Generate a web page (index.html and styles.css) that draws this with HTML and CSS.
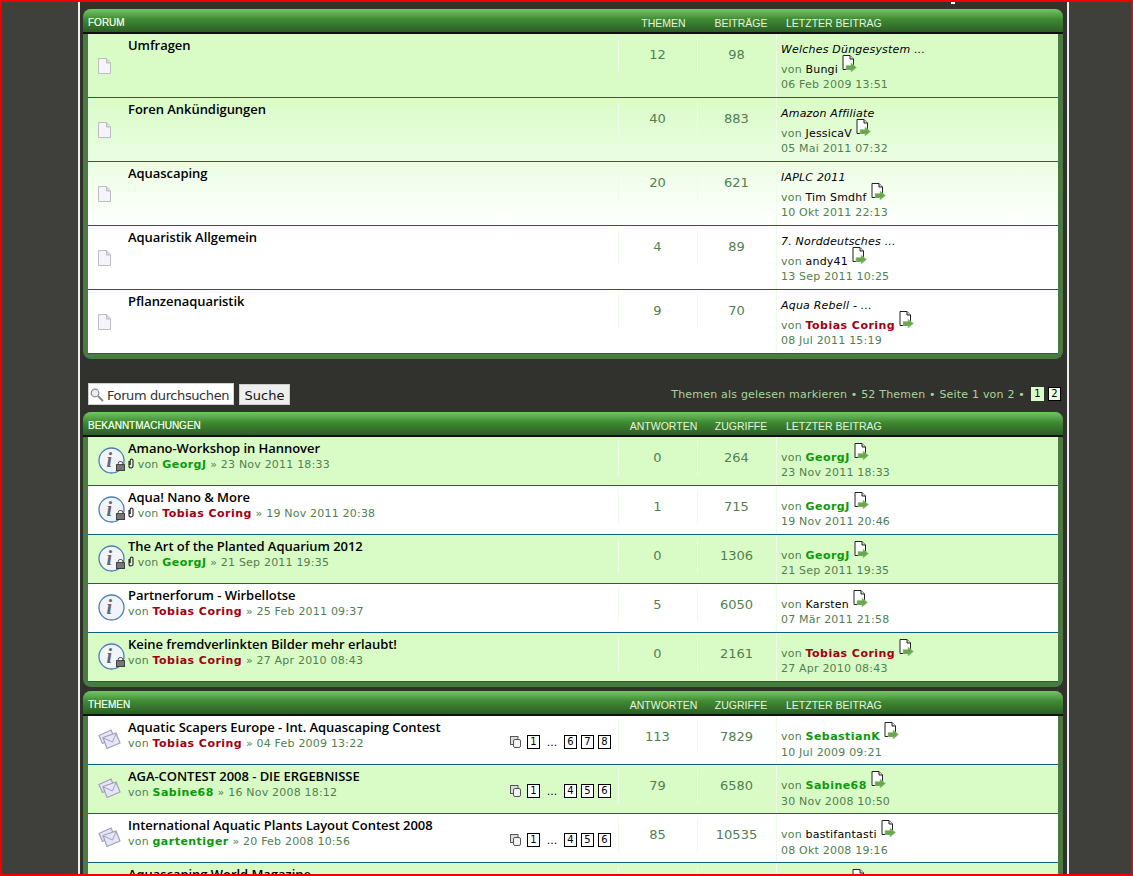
FILE: index.html
```html
<!DOCTYPE html>
<html lang="de">
<head>
<meta charset="utf-8">
<title>Forum</title>
<link rel="stylesheet" href="styles.css">
</head>
<body>
<svg class="defs" width="0" height="0">
  <defs>
    <symbol id="page" viewBox="0 0 13 16">
      <path d="M.5.5h8l4 4.500v10.500H.5z" fill="#f5f3fb" stroke="#bdbdbd"/>
      <path d="M8.500.5v4.500h4" fill="#d8d8d8" stroke="#bdbdbd"/>
    </symbol>
    <symbol id="post" viewBox="0 0 15 18">
      <path d="M1 .5h7l3.500 3.500v10.500H1z" fill="#fff" stroke="#222"/>
      <path d="M8 .5v3.500h3.500" fill="#ddd" stroke="#222"/>
      <path d="M4 10.500h5V8l5.500 4.500L9 17v-2.500H4z" fill="#6aa84f" stroke="#9ccb88" stroke-width=".6"/>
    </symbol>
    <symbol id="info" viewBox="0 0 27 27">
      <circle cx="13.500" cy="13.500" r="12.500" fill="#f2f4fb" stroke="#4a7fb5" stroke-width="1.300"/>
      <text class="info-i" x="8.500" y="20">i</text>
    </symbol>
    <symbol id="lock" viewBox="0 0 10 11">
      <rect x="2.500" y=".5" width="5" height="5" rx="2" fill="none" stroke="#444"/>
      <rect x=".5" y="4" width="9" height="6.500" fill="#777" stroke="#333"/>
    </symbol>
    <symbol id="clip" viewBox="0 0 6 11">
      <path d="M1 3v5a2 2 0 0 0 4 0V2.500a1.400 1.400 0 0 0-2.800 0V7" fill="none" stroke="#333" stroke-width="1.200"/>
    </symbol>
    <symbol id="topic" viewBox="0 0 23 21">
      <path d="M1 6.500 13 1l3.500 8-12 5.500z" fill="#e6e6f4" stroke="#a0a0b8" stroke-width="1.200"/>
      <path d="M5 8.500 18 4l4 10-13 5.500z" fill="#e6e6fa" stroke="#a0a0b8" stroke-width="1.200"/>
      <path d="M5.500 9 14.500 13 18 4.500" fill="none" stroke="#a0a0b8"/>
    </symbol>
    <symbol id="pages" viewBox="0 0 11 12">
      <rect x=".5" y=".5" width="7.500" height="8" fill="#ddd" stroke="#555"/>
      <rect x="3.500" y="3.500" width="7" height="8" rx="1.500" fill="#f4f4f4" stroke="#555"/>
    </symbol>
    <symbol id="lens" viewBox="0 0 14 14">
      <circle cx="5" cy="5" r="3.800" fill="#e8eef6" stroke="#8a8a8a" stroke-width="1.200"/>
      <path d="M8 8l5 5" stroke="#888" stroke-width="2"/>
    </symbol>
  </defs>
</svg>
<div class="frame"></div>
<div class="wrap">
  <span class="tick"></span>

  <section class="panel">
    <header class="head">
      <span class="head-title">FORUM</span>
      <span class="head-col">THEMEN</span>
      <span class="head-col">BEITRÄGE</span>
      <span class="head-last">LETZTER BEITRAG</span>
    </header>
    <ul class="rows rows-fade">
      <li class="row row-forum">
        <svg class="ico-page"><use href="#page"/></svg>
        <div class="main"><a class="title">Umfragen</a></div>
        <div class="num">12</div><div class="num">98</div>
        <div class="last"><em>Welches Düngesystem ...</em><span class="by">von <b class="plain">Bungi</b><svg class="ico-post"><use href="#post"/></svg></span><span>06 Feb 2009 13:51</span></div>
      </li>
      <li class="row row-forum">
        <svg class="ico-page"><use href="#page"/></svg>
        <div class="main"><a class="title">Foren Ankündigungen</a></div>
        <div class="num">40</div><div class="num">883</div>
        <div class="last"><em>Amazon Affiliate</em><span class="by">von <b class="plain">JessicaV</b><svg class="ico-post"><use href="#post"/></svg></span><span>05 Mai 2011 07:32</span></div>
      </li>
      <li class="row row-forum">
        <svg class="ico-page"><use href="#page"/></svg>
        <div class="main"><a class="title">Aquascaping</a></div>
        <div class="num">20</div><div class="num">621</div>
        <div class="last"><em>IAPLC 2011</em><span class="by">von <b class="plain">Tim Smdhf</b><svg class="ico-post"><use href="#post"/></svg></span><span>10 Okt 2011 22:13</span></div>
      </li>
      <li class="row row-forum">
        <svg class="ico-page"><use href="#page"/></svg>
        <div class="main"><a class="title">Aquaristik Allgemein</a></div>
        <div class="num">4</div><div class="num">89</div>
        <div class="last"><em>7. Norddeutsches ...</em><span class="by">von <b class="plain">andy41</b><svg class="ico-post"><use href="#post"/></svg></span><span>13 Sep 2011 10:25</span></div>
      </li>
      <li class="row row-forum">
        <svg class="ico-page"><use href="#page"/></svg>
        <div class="main"><a class="title">Pflanzenaquaristik</a></div>
        <div class="num">9</div><div class="num">70</div>
        <div class="last"><em>Aqua Rebell - ...</em><span class="by">von <b class="red">Tobias Coring</b><svg class="ico-post"><use href="#post"/></svg></span><span>08 Jul 2011 15:19</span></div>
      </li>
    </ul>
  </section>

  <div class="bar">
    <div class="search">
      <label class="search-box"><svg class="ico-lens"><use href="#lens"/></svg>Forum durchsuchen</label>
      <button class="search-btn">Suche</button>
    </div>
    <div class="pagination">
      <span>Themen als gelesen markieren • 52 Themen • Seite 1 von 2 •</span>
      <span class="pg pg-on">1</span><span class="pg pg-off">2</span>
    </div>
  </div>

  <section class="panel">
    <header class="head">
      <span class="head-title">BEKANNTMACHUNGEN</span>
      <span class="head-col">ANTWORTEN</span>
      <span class="head-col">ZUGRIFFE</span>
      <span class="head-last">LETZTER BEITRAG</span>
    </header>
    <ul class="rows">
      <li class="row green">
        <span class="ico-wrap"><svg class="ico-info"><use href="#info"/></svg><svg class="ico-lock"><use href="#lock"/></svg></span>
        <div class="main"><a class="title">Amano-Workshop in Hannover</a><span class="sub"><svg class="ico-clip"><use href="#clip"/></svg> von <b class="grn">GeorgJ</b> » 23 Nov 2011 18:33</span></div>
        <div class="num">0</div><div class="num">264</div>
        <div class="last two"><span class="by">von <b class="grn">GeorgJ</b><svg class="ico-post"><use href="#post"/></svg></span><span>23 Nov 2011 18:33</span></div>
      </li>
      <li class="row">
        <span class="ico-wrap"><svg class="ico-info"><use href="#info"/></svg><svg class="ico-lock"><use href="#lock"/></svg></span>
        <div class="main"><a class="title">Aqua! Nano &amp; More</a><span class="sub"><svg class="ico-clip"><use href="#clip"/></svg> von <b class="red">Tobias Coring</b> » 19 Nov 2011 20:38</span></div>
        <div class="num">1</div><div class="num">715</div>
        <div class="last two"><span class="by">von <b class="grn">GeorgJ</b><svg class="ico-post"><use href="#post"/></svg></span><span>19 Nov 2011 20:46</span></div>
      </li>
      <li class="row green">
        <span class="ico-wrap"><svg class="ico-info"><use href="#info"/></svg><svg class="ico-lock"><use href="#lock"/></svg></span>
        <div class="main"><a class="title">The Art of the Planted Aquarium 2012</a><span class="sub"><svg class="ico-clip"><use href="#clip"/></svg> von <b class="grn">GeorgJ</b> » 21 Sep 2011 19:35</span></div>
        <div class="num">0</div><div class="num">1306</div>
        <div class="last two"><span class="by">von <b class="grn">GeorgJ</b><svg class="ico-post"><use href="#post"/></svg></span><span>21 Sep 2011 19:35</span></div>
      </li>
      <li class="row">
        <span class="ico-wrap"><svg class="ico-info"><use href="#info"/></svg></span>
        <div class="main"><a class="title">Partnerforum - Wirbellotse</a><span class="sub">von <b class="red">Tobias Coring</b> » 25 Feb 2011 09:37</span></div>
        <div class="num">5</div><div class="num">6050</div>
        <div class="last two"><span class="by">von <b class="plain">Karsten</b><svg class="ico-post"><use href="#post"/></svg></span><span>07 Mär 2011 21:58</span></div>
      </li>
      <li class="row green">
        <span class="ico-wrap"><svg class="ico-info"><use href="#info"/></svg><svg class="ico-lock"><use href="#lock"/></svg></span>
        <div class="main"><a class="title">Keine fremdverlinkten Bilder mehr erlaubt!</a><span class="sub">von <b class="red">Tobias Coring</b> » 27 Apr 2010 08:43</span></div>
        <div class="num">0</div><div class="num">2161</div>
        <div class="last two"><span class="by">von <b class="red">Tobias Coring</b><svg class="ico-post"><use href="#post"/></svg></span><span>27 Apr 2010 08:43</span></div>
      </li>
    </ul>
  </section>

  <section class="panel panel-next">
    <header class="head">
      <span class="head-title">THEMEN</span>
      <span class="head-col">ANTWORTEN</span>
      <span class="head-col">ZUGRIFFE</span>
      <span class="head-last">LETZTER BEITRAG</span>
    </header>
    <ul class="rows">
      <li class="row">
        <svg class="ico-topic"><use href="#topic"/></svg>
        <div class="main"><a class="title">Aquatic Scapers Europe - Int. Aquascaping Contest</a><span class="sub">von <b class="red">Tobias Coring</b> » 04 Feb 2009 13:22</span>
          <span class="mini"><svg class="ico-pages"><use href="#pages"/></svg><i>1</i><u>...</u><i>6</i><i>7</i><i>8</i></span></div>
        <div class="num">113</div><div class="num">7829</div>
        <div class="last two"><span class="by">von <b class="grn">SebastianK</b><svg class="ico-post"><use href="#post"/></svg></span><span>10 Jul 2009 09:21</span></div>
      </li>
      <li class="row green">
        <svg class="ico-topic"><use href="#topic"/></svg>
        <div class="main"><a class="title">AGA-CONTEST 2008 - DIE ERGEBNISSE</a><span class="sub">von <b class="grn">Sabine68</b> » 16 Nov 2008 18:12</span>
          <span class="mini"><svg class="ico-pages"><use href="#pages"/></svg><i>1</i><u>...</u><i>4</i><i>5</i><i>6</i></span></div>
        <div class="num">79</div><div class="num">6580</div>
        <div class="last two"><span class="by">von <b class="grn">Sabine68</b><svg class="ico-post"><use href="#post"/></svg></span><span>30 Nov 2008 10:50</span></div>
      </li>
      <li class="row">
        <svg class="ico-topic"><use href="#topic"/></svg>
        <div class="main"><a class="title">International Aquatic Plants Layout Contest 2008</a><span class="sub">von <b class="grn">gartentiger</b> » 20 Feb 2008 10:56</span>
          <span class="mini"><svg class="ico-pages"><use href="#pages"/></svg><i>1</i><u>...</u><i>4</i><i>5</i><i>6</i></span></div>
        <div class="num">85</div><div class="num">10535</div>
        <div class="last two"><span class="by">von <b class="plain">bastifantasti</b><svg class="ico-post"><use href="#post"/></svg></span><span>08 Okt 2008 19:16</span></div>
      </li>
      <li class="row green">
        <svg class="ico-topic"><use href="#topic"/></svg>
        <div class="main"><a class="title">Aquascaping World Magazine</a></div>
        <div class="num"></div><div class="num"></div>
        <div class="last two"><span class="by"><svg class="ico-post ico-post-far"><use href="#post"/></svg></span></div>
      </li>
    </ul>
  </section>
</div>
</body>
</html>
```
FILE: styles.css
```css
* { box-sizing: border-box; }
html, body { margin: 0; height: 876px; overflow: hidden; }
body {
  background: #3f403c;
  font-family: "DejaVu Sans", sans-serif;
  font-size: 11px;
  letter-spacing: .2px;
  color: #527f50;
  padding: 0 64px 0 78px;
}
.defs { position: absolute; }
.frame {
  position: fixed;
  inset: 0;
  border: 2px solid #f00000;
  pointer-events: none;
  z-index: 5;
}
.wrap {
  position: relative;
  width: 991px;
  height: 876px;
  background: #31322e;
  border-left: 2px solid #eee;
  border-right: 2px solid #eee;
  padding: 9px 4px 0 3px;
  overflow: hidden;
}
.tick {
  position: absolute;
  left: 871px;
  top: 2px;
  width: 4px;
  height: 2px;
  background: #fff;
}
.panel {
  width: 980px;
  background: #4a7a40;
  border-radius: 8px;
  padding-bottom: 5px;
}
.panel-next { margin-top: 4px; }
.head {
  display: flex;
  align-items: center;
  height: 25px;
  padding: 3px 0 1px 5px;
  color: #e6f5df;
  font-family: "Liberation Sans", sans-serif;
  font-size: 10.5px;
  letter-spacing: 0;
  background:
    linear-gradient(#101010, #101010) 0 23px / 100% 2px no-repeat,
    linear-gradient(#73c663, #3f8a33 45%, #2c5e25 100%) 0 0 / 100% 23px no-repeat;
  border-radius: 8px 8px 0 0;
}
.head-title { flex: 1; font-size: 10px; text-shadow: 0 0 .6px #e6f5df; }
.head-col { width: 79px; text-align: center; padding-left: 2px; }
.head-col + .head-col { padding: 0 1px 0 0; }
.head-last { width: 282px; padding-left: 5px; }
.rows {
  list-style: none;
  margin: 0 5px;
  padding: 0;
  background: #fff;
}
.rows-fade {
  background: linear-gradient(#d9fcc7 0, #d9fcc7 64px, #fff 192px);
}
.row {
  position: relative;
  display: flex;
  align-items: flex-start;
  height: 49px;
  padding-left: 10px;
  border-bottom: 1px solid #0f5f7f;
  background: #fff;
}
.green { background: #d9fcc7; }
.row-forum { height: 64px; background: transparent; }
.ico-page { width: 13px; height: 16px; margin-top: 24px; flex: none; }
.ico-wrap { position: relative; width: 27px; height: 27px; margin-top: 10px; flex: none; }
.ico-info { width: 27px; height: 27px; display: block; }
.info-i { font: italic 700 20px "Liberation Serif", serif; fill: #666; }
.ico-lock { position: absolute; left: 18px; top: 14px; width: 9px; height: 10px; }
.ico-topic { width: 23px; height: 21px; margin-top: 13px; flex: none; }
.ico-post { width: 15px; height: 18px; margin: -18px 0 0 4px; vertical-align: 0; }
.ico-post-far { margin-left: 71px; }
.ico-clip { width: 6px; height: 11px; vertical-align: -1px; }
.ico-lens { width: 14px; height: 14px; flex: none; }
.ico-pages { width: 11px; height: 12px; margin-right: 2px; }
.main { flex: 1; min-width: 0; position: relative; padding: 2px 0 0 3px; align-self: stretch; }
.row-forum .main { padding-left: 17px; }
.ico-topic + .main { padding-left: 7px; }
.title {
  display: block;
  font-family: "Open Sans", sans-serif;
  font-size: 13px;
  font-weight: 600;
  letter-spacing: -.05px;
  line-height: 18px;
  color: #000;
}
.sub { display: block; line-height: 14px; margin-top: 1px; white-space: nowrap; }
.num {
  flex: none;
  width: 79px;
  height: 34px;
  margin-top: 4px;
  padding: 0 1px 1px 0;
  border-left: 1px solid #eefbe8;
  display: flex;
  align-items: center;
  justify-content: center;
  font-size: 13px;
  letter-spacing: 0;
}
.last {
  flex: none;
  width: 282px;
  height: 100%;
  border-left: 1px solid #eefbe8;
  padding: 8px 0 0 4px;
  line-height: 15px;
  display: flex;
  flex-direction: column;
}
.last.two { padding-top: 13px; }
.last em { color: #000; margin-bottom: 5px; }
.by { white-space: nowrap; height: 15px; line-height: 15px; }
.panel-next .by { height: 16px; }
.plain { font-weight: 400; color: #000; }
.grn { color: #0a9a0a; font-weight: 700; letter-spacing: .47px; }
.red { color: #a00012; font-weight: 700; letter-spacing: .47px; }
.mini {
  position: absolute;
  right: 7px;
  top: 19px;
  display: flex;
  align-items: center;
  gap: 4px;
  color: #000;
  letter-spacing: 0;
}
.mini i {
  font-style: normal;
  width: 13px;
  height: 14px;
  border: 1px solid #000;
  background: #fff;
  text-align: center;
  line-height: 12px;
  font-size: 10px;
}
.mini u { text-decoration: none; width: 16px; text-align: center; }
.bar {
  display: flex;
  align-items: flex-start;
  justify-content: space-between;
  height: 53px;
  padding: 25px 2px 0 5px;
}
.search { display: flex; gap: 5px; }
.search-box {
  display: flex;
  align-items: center;
  gap: 3px;
  width: 146px;
  height: 22px;
  margin-top: -1px;
  padding: 2px 0 0 1px;
  background: #fff;
  color: #333;
  font-size: 13px;
  letter-spacing: -.4px;
  white-space: nowrap;
  overflow: hidden;
  border: 1px solid #d0d0d0;
}
.search-btn {
  width: 51px;
  height: 21px;
  background: #eee;
  border: 1px solid #ccc;
  font: 13px "DejaVu Sans", sans-serif;
  color: #111;
  padding: 1px 0 0;
}
.pagination {
  display: flex;
  align-items: center;
  gap: 4px;
  color: #a9d59b;
  padding-top: 3px;
  white-space: nowrap;
}
.pagination > span:first-child { margin-right: 2px; }
.pg {
  width: 13px;
  height: 14px;
  text-align: center;
  line-height: 13px;
  font-size: 10px;
  letter-spacing: 0;
  color: #000;
}
.pg-on { background: #d9fcc7; }
.pg-off { background: #e9fde0; border: 1px solid #000; line-height: 12px; }
```
